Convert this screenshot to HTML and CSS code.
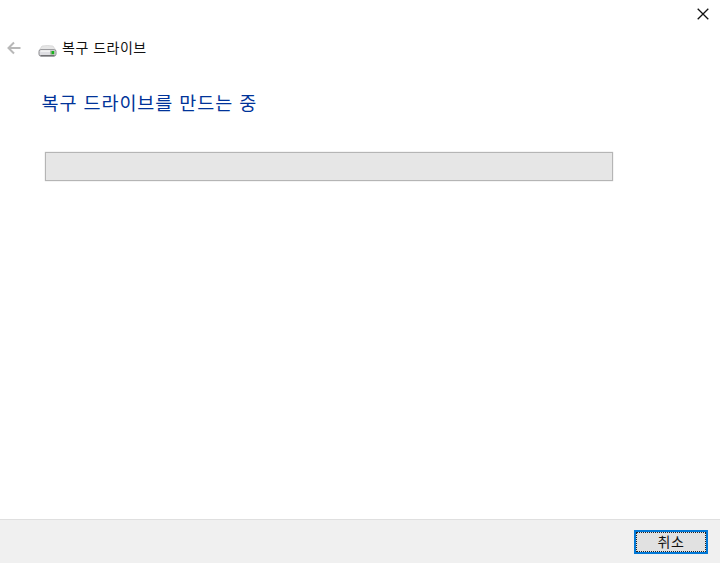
FILE: index.html
```
<!DOCTYPE html>
<html lang="ko">
<head>
    <meta charset="utf-8">
    <title>복구 드라이브</title>
    <link rel="stylesheet" href="styles.css">
</head>
<body>
    <div class="wizard">
        <div class="titlebar">
            <button class="close-btn" aria-label="닫기">
                <svg width="12" height="12" viewBox="0 0 12 12">
                    <path d="M0.7 0.7L11.3 11.3M11.3 0.7L0.7 11.3" fill="none" stroke="#111" stroke-width="1.3"/>
                </svg>
            </button>
        </div>

        <!-- 뒤로 버튼, 드라이브 아이콘 -->
        <div class="header">
            <svg class="back" width="14" height="14" viewBox="0 0 14 14">
                <path d="M13.5 7H1.5M7 1.5L1.5 7L7 12.5" fill="none" stroke="#b8b8b8" stroke-width="2"/>
            </svg>
            <svg class="drive" width="19" height="12" viewBox="0 0 19 12">
                <path d="M4 1Q9.5 0 15 1L18 5.5H1Z" fill="#e6e6e6" stroke="#d2d2d2" stroke-width=".7"/>
                <rect x="1" y="4.7" width="17" height="6.3" rx="1.8" fill="#dedee2" stroke="#8a8a8e"/>
                <path d="M2.5 6H12" stroke="#fafafa" stroke-width="1.4"/>
                <path d="M2.5 10.8H16.5" stroke="#555558" stroke-width="1"/>
                <rect x="12.5" y="6" width="4" height="3.5" fill="#72aa68"/>
                <rect x="14" y="6" width="2" height="3" fill="#16b51c"/>
            </svg>
            <span class="app-name">복구 드라이브</span>
        </div>

        <div class="content">
            <h1>복구 드라이브를 만드는 중</h1>
            <div class="progress"></div>
        </div>

        <div class="footer">
            <button class="cancel-btn"><span>취소</span></button>
        </div>
    </div>
</body>
</html>
```
FILE: styles.css
```
* {
    box-sizing: border-box;
}
body {
    margin: 0;
    background-color: #fff;
    font-family: "Noto Sans CJK KR", sans-serif;
}
button {
    padding: 0;
    border: none;
    background: none;
    font-family: inherit;
}
.wizard {
    display: flex;
    flex-direction: column;
    height: 563px;
}
.titlebar {
    display: flex;
    justify-content: flex-end;
    height: 37px;
    padding: 8px 11px 0 0;
}
.close-btn {
    width: 12px;
    height: 12px;
}
.close-btn svg {
    display: block;
}
.header {
    display: flex;
    align-items: center;
    height: 22px;
    padding-left: 7px;
}
.drive {
    margin: 6px 0 0 17px;
}
.app-name {
    margin: -2px 0 0 5px;
    font-size: 14px;
    line-height: 20px;
    letter-spacing: 0.5px;
    color: #111;
}
.content {
    flex: 1;
    padding: 30px 0 0 41px;
}
h1 {
    margin: 0;
    padding-left: 0.5px;
    font-size: 18.5px;
    font-weight: 400;
    line-height: 26px;
    letter-spacing: 0.93px;
    color: #003399;
}
/* 진행률 표시줄 */
.progress {
    width: 568px;
    height: 29px;
    margin: 37px 0 0 4px;
    border: 1px solid #b5b5b5;
    background-color: #e6e6e6;
    box-shadow: 0 0 1px #bcbcbc;
}
.footer {
    display: flex;
    justify-content: flex-end;
    height: 44px;
    padding: 10px 12px 0 0;
    border-top: 1px solid #dfdfdf;
    background-color: #f0f0f0;
}
.cancel-btn {
    width: 74px;
    height: 24px;
    border: 2px solid #0078d7;
    background-color: #e1e1e1;
}
.cancel-btn span {
    display: block;
    height: 20px;
    border: 1px dotted #222;
    font-size: 14px;
    line-height: 17px;
    letter-spacing: 0.5px;
    color: #111;
}
```
